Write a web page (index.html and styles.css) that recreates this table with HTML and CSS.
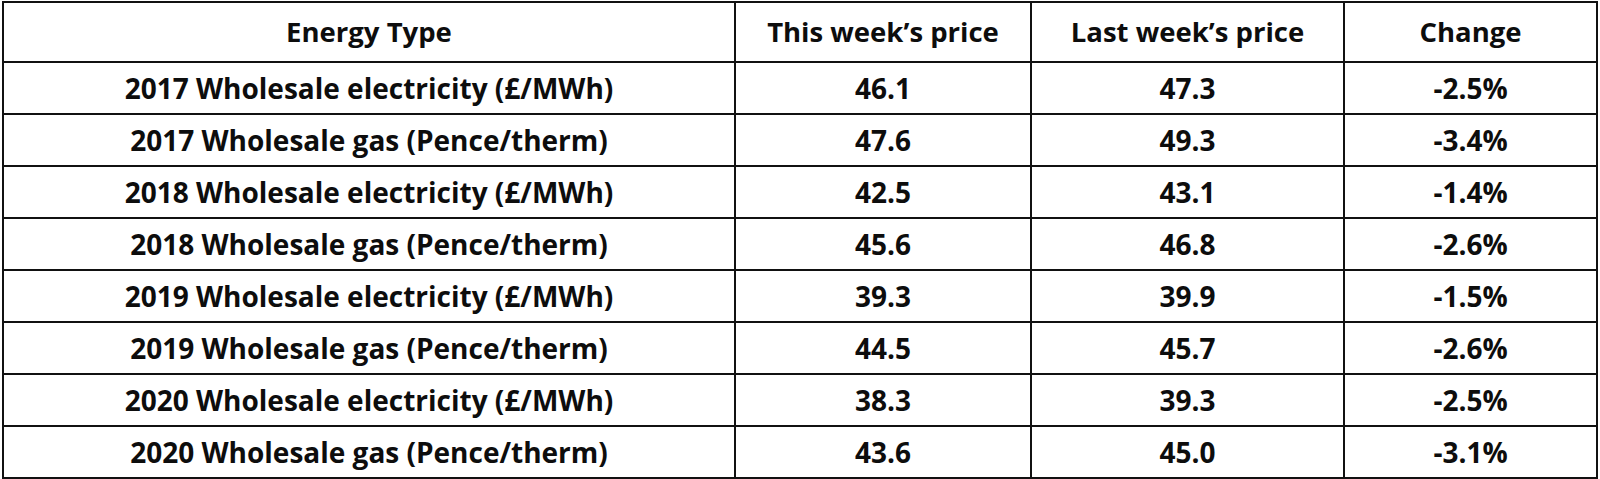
FILE: index.html
```html
<!DOCTYPE html>
<html lang="en">
<head>
<meta charset="utf-8">
<title>Energy prices</title>
<link rel="stylesheet" href="styles.css">
</head>
<body>
<div class="wrap">
<table class="prices">
  <colgroup>
    <col class="c-type">
    <col class="c-this">
    <col class="c-last">
    <col class="c-change">
  </colgroup>
  <thead>
    <tr class="head">
      <th>Energy Type</th>
      <th>This week’s price</th>
      <th>Last week’s price</th>
      <th>Change</th>
    </tr>
  </thead>
  <tbody>
    <tr><td>2017 Wholesale electricity (£/MWh)</td><td>46.1</td><td>47.3</td><td>-2.5%</td></tr>
    <tr><td>2017 Wholesale gas (Pence/therm)</td><td>47.6</td><td>49.3</td><td>-3.4%</td></tr>
    <tr><td>2018 Wholesale electricity (£/MWh)</td><td>42.5</td><td>43.1</td><td>-1.4%</td></tr>
    <tr><td>2018 Wholesale gas (Pence/therm)</td><td>45.6</td><td>46.8</td><td>-2.6%</td></tr>
    <tr><td>2019 Wholesale electricity (£/MWh)</td><td>39.3</td><td>39.9</td><td>-1.5%</td></tr>
    <tr><td>2019 Wholesale gas (Pence/therm)</td><td>44.5</td><td>45.7</td><td>-2.6%</td></tr>
    <tr><td>2020 Wholesale electricity (£/MWh)</td><td>38.3</td><td>39.3</td><td>-2.5%</td></tr>
    <tr><td>2020 Wholesale gas (Pence/therm)</td><td>43.6</td><td>45.0</td><td>-3.1%</td></tr>
  </tbody>
</table>
</div>
</body>
</html>
```
FILE: styles.css
```css
html, body {
  margin: 0;
  padding: 0;
  background: #ffffff;
}

.wrap {
  padding: 1px 2px 0 2px;
}

.prices {
  border-collapse: separate;
  border-spacing: 0;
  table-layout: fixed;
  width: 1596px;
  border-top: 2px solid #111111;
  border-left: 2px solid #111111;
  font-family: "Open Sans", "Liberation Sans", sans-serif;
  font-weight: 700;
  font-size: 28px;
  color: #0d0d0d;
}

.c-type { width: 732px; }
.c-this { width: 296px; }
.c-last { width: 313px; }
.c-change { width: 253px; }

.prices th,
.prices td {
  box-sizing: border-box;
  border-right: 2px solid #111111;
  border-bottom: 2px solid #111111;
  text-align: center;
  vertical-align: middle;
  padding: 0;
  font-weight: 700;
  white-space: nowrap;
  line-height: 38px;
}

.prices th {
  font-size: 27.5px;
}

.prices .head th {
  height: 60px;
}

.prices tbody td {
  height: 52px;
}
```
